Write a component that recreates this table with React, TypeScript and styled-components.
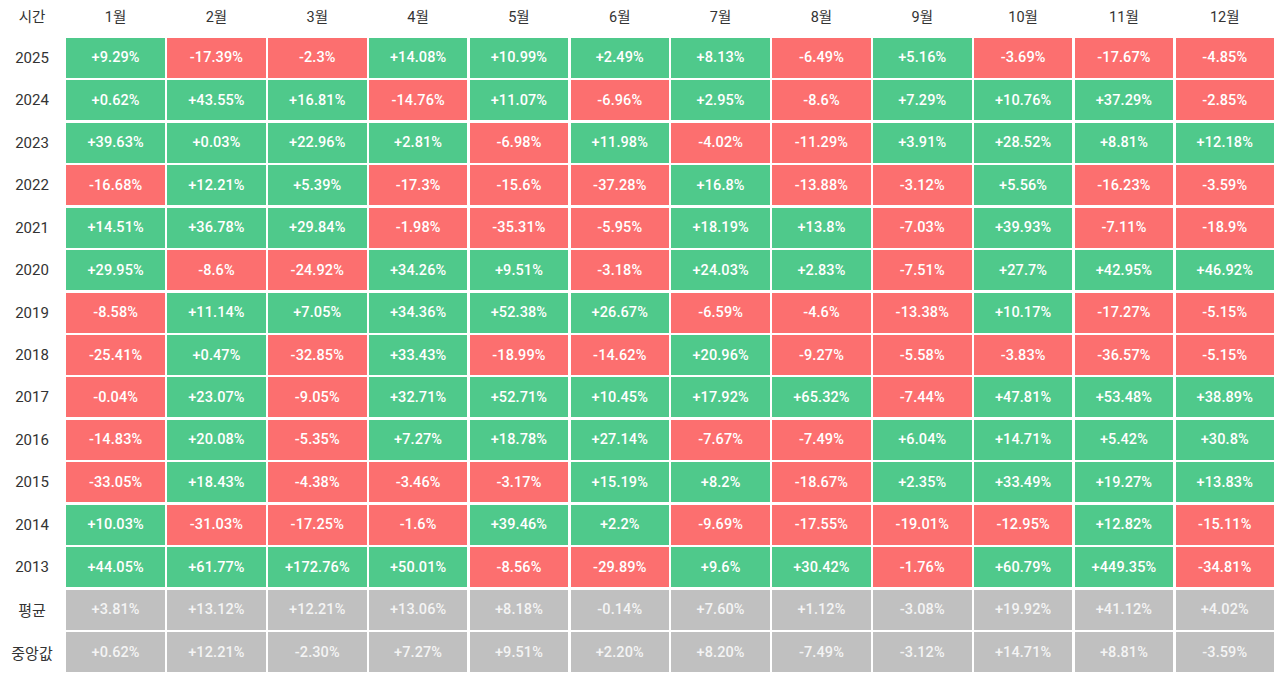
import React from 'react'
import styled, { createGlobalStyle } from 'styled-components'

const Global = createGlobalStyle`
  html, body {
    margin: 0;
    padding: 0;
    background: #fff;
  }
  body {
    font-family: Roboto, "Noto Sans CJK KR", "Noto Sans", sans-serif;
  }
`

const Grid = styled.div`
  display: grid;
  grid-template-columns: 64px repeat(12, 1fr);
  grid-template-rows: 35.5px repeat(15, 40px);
  column-gap: 2.4px;
  row-gap: 2.45px;
  width: 1274px;
`

const Head = styled.div`
  display: flex;
  align-items: center;
  justify-content: center;
  font-size: 14.5px;
  color: #333;
  padding-bottom: 4px;
`

const Label = styled.div`
  display: flex;
  align-items: center;
  justify-content: center;
  font-size: 15px;
  color: #333;
`

type Tone = 'up' | 'down' | 'stat'

const toneBg: Record<Tone, string> = {
  up: '#4fc98b',
  down: '#fc6f6f',
  stat: '#c0c0c0',
}

const Cell = styled.div<{ $tone: Tone }>`
  display: flex;
  align-items: center;
  justify-content: center;
  background: ${(p) => toneBg[p.$tone]};
  color: ${(p) => (p.$tone === 'stat' ? '#f4f4f4' : '#fff')};
  font-size: 14.5px;
  font-weight: 500;
  letter-spacing: 0.1px;
`

const months = ['1월', '2월', '3월', '4월', '5월', '6월', '7월', '8월', '9월', '10월', '11월', '12월']

const years: [string, string[]][] = [
  ['2025', ['+9.29%', '-17.39%', '-2.3%', '+14.08%', '+10.99%', '+2.49%', '+8.13%', '-6.49%', '+5.16%', '-3.69%', '-17.67%', '-4.85%']],
  ['2024', ['+0.62%', '+43.55%', '+16.81%', '-14.76%', '+11.07%', '-6.96%', '+2.95%', '-8.6%', '+7.29%', '+10.76%', '+37.29%', '-2.85%']],
  ['2023', ['+39.63%', '+0.03%', '+22.96%', '+2.81%', '-6.98%', '+11.98%', '-4.02%', '-11.29%', '+3.91%', '+28.52%', '+8.81%', '+12.18%']],
  ['2022', ['-16.68%', '+12.21%', '+5.39%', '-17.3%', '-15.6%', '-37.28%', '+16.8%', '-13.88%', '-3.12%', '+5.56%', '-16.23%', '-3.59%']],
  ['2021', ['+14.51%', '+36.78%', '+29.84%', '-1.98%', '-35.31%', '-5.95%', '+18.19%', '+13.8%', '-7.03%', '+39.93%', '-7.11%', '-18.9%']],
  ['2020', ['+29.95%', '-8.6%', '-24.92%', '+34.26%', '+9.51%', '-3.18%', '+24.03%', '+2.83%', '-7.51%', '+27.7%', '+42.95%', '+46.92%']],
  ['2019', ['-8.58%', '+11.14%', '+7.05%', '+34.36%', '+52.38%', '+26.67%', '-6.59%', '-4.6%', '-13.38%', '+10.17%', '-17.27%', '-5.15%']],
  ['2018', ['-25.41%', '+0.47%', '-32.85%', '+33.43%', '-18.99%', '-14.62%', '+20.96%', '-9.27%', '-5.58%', '-3.83%', '-36.57%', '-5.15%']],
  ['2017', ['-0.04%', '+23.07%', '-9.05%', '+32.71%', '+52.71%', '+10.45%', '+17.92%', '+65.32%', '-7.44%', '+47.81%', '+53.48%', '+38.89%']],
  ['2016', ['-14.83%', '+20.08%', '-5.35%', '+7.27%', '+18.78%', '+27.14%', '-7.67%', '-7.49%', '+6.04%', '+14.71%', '+5.42%', '+30.8%']],
  ['2015', ['-33.05%', '+18.43%', '-4.38%', '-3.46%', '-3.17%', '+15.19%', '+8.2%', '-18.67%', '+2.35%', '+33.49%', '+19.27%', '+13.83%']],
  ['2014', ['+10.03%', '-31.03%', '-17.25%', '-1.6%', '+39.46%', '+2.2%', '-9.69%', '-17.55%', '-19.01%', '-12.95%', '+12.82%', '-15.11%']],
  ['2013', ['+44.05%', '+61.77%', '+172.76%', '+50.01%', '-8.56%', '-29.89%', '+9.6%', '+30.42%', '-1.76%', '+60.79%', '+449.35%', '-34.81%']],
]

const stats: [string, string[]][] = [
  ['평균', ['+3.81%', '+13.12%', '+12.21%', '+13.06%', '+8.18%', '-0.14%', '+7.60%', '+1.12%', '-3.08%', '+19.92%', '+41.12%', '+4.02%']],
  ['중앙값', ['+0.62%', '+12.21%', '-2.30%', '+7.27%', '+9.51%', '+2.20%', '+8.20%', '-7.49%', '-3.12%', '+14.71%', '+8.81%', '-3.59%']],
]

export default function App() {
  return (
    <>
      <Global />
      <Grid>
        <Head>시간</Head>
        {months.map((m) => (
          <Head key={m}>{m}</Head>
        ))}
        {years.map(([year, vals]) => (
          <React.Fragment key={year}>
            <Label>{year}</Label>
            {vals.map((v, i) => (
              <Cell key={i} $tone={v.startsWith('-') ? 'down' : 'up'}>{v}</Cell>
            ))}
          </React.Fragment>
        ))}
        {stats.map(([name, vals]) => (
          <React.Fragment key={name}>
            <Label>{name}</Label>
            {vals.map((v, i) => (
              <Cell key={i} $tone="stat">{v}</Cell>
            ))}
          </React.Fragment>
        ))}
      </Grid>
    </>
  )
}
